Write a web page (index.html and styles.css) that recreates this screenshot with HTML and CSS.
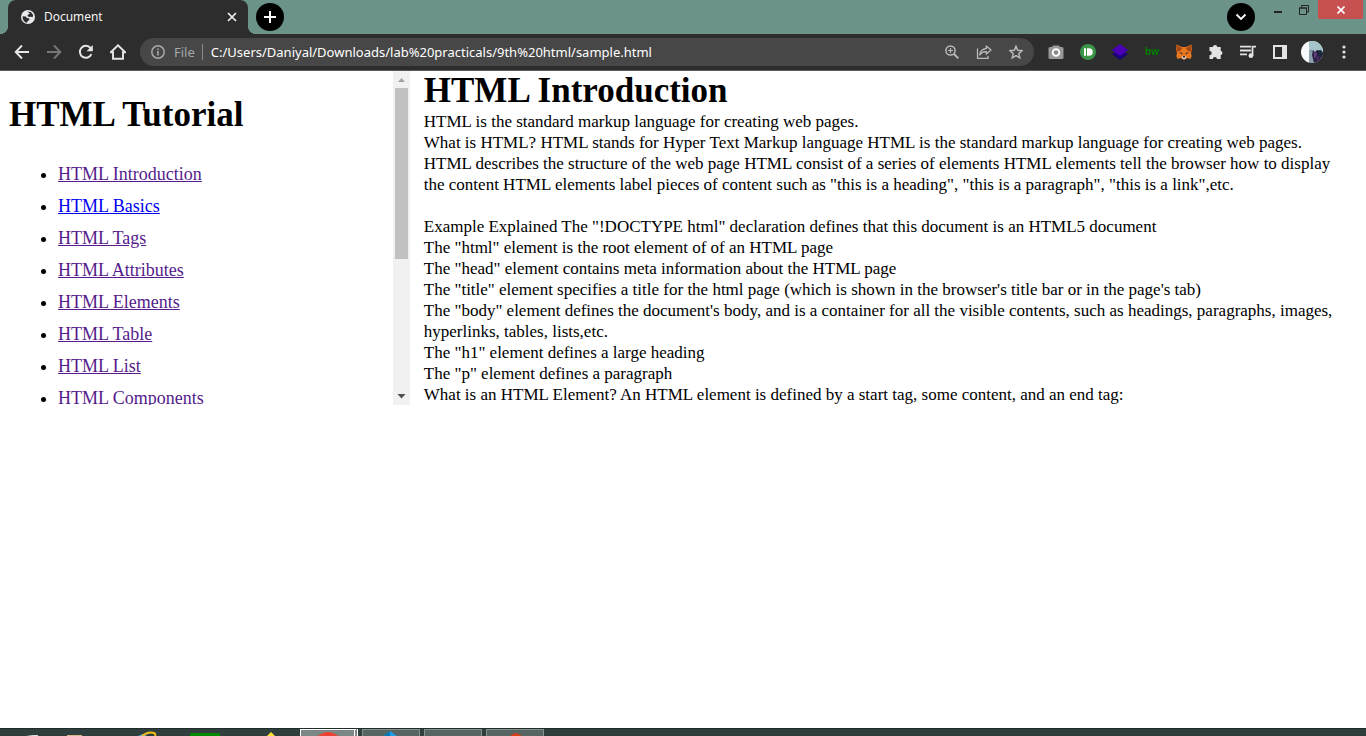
FILE: index.html
```html
<!DOCTYPE html>
<html lang="en">
<head>
<meta charset="utf-8">
<title>Document</title>
<link rel="stylesheet" href="styles.css">
</head>
<body>
<header class="browser">
  <div class="tabstrip">
    <div class="tab">
      <svg class="globe" width="14" height="14" viewBox="0 0 14 14" aria-hidden="true"><circle cx="7" cy="7" r="7" fill="#e8eaed"/><path d="M1.600 6.200 4.800 6.400 6 8l2.200.4.3 1.400-1.900 1.400-.6 1.500C3 12.200 1.500 9.500 1.600 6.200zM6.300 1.600 9.800 2l2.400 2.900-.6 2.300-2-.5-1.400.4L6.400 6l.5-1.300 1.900-.9-.8-1z" fill="#2d2d2d"/></svg>
      <span class="tab-title">Document</span>
      <button class="plain tab-close" aria-label="Close tab"><svg width="10" height="10" viewBox="0 0 10 10"><path d="m1 1 8 8M9 1 1 9" stroke="#f1f1f1" stroke-width="1.700"/></svg></button>
    </div>
    <button class="round" aria-label="New tab"><svg width="12" height="12" viewBox="0 0 12 12"><path d="M6 0v12M0 6h12" stroke="#fff" stroke-width="2"/></svg></button>
    <div class="window-controls">
      <button class="round search-tabs" aria-label="Search tabs"><svg width="12" height="8" viewBox="0 0 12 8"><path d="m1.500 1.500 4.500 4.500 4.500-4.500" fill="none" stroke="#fff" stroke-width="1.800"/></svg></button>
      <button class="plain win" aria-label="Minimize"><svg width="8" height="6" viewBox="0 0 8 6"><path d="M0 4h8v2H0z" fill="#222"/></svg></button>
      <button class="plain win" aria-label="Restore"><svg width="10" height="10" viewBox="0 0 10 10"><path d="M.5 3h7v6.500h-7zM0 3h8M2.500 2V.5h7V7H8" fill="none" stroke="#222"/></svg></button>
      <button class="plain win-close" aria-label="Close"><svg width="8" height="8" viewBox="0 0 8 8"><path d="m.5.5 7 7m0-7-7 7" stroke="#fff" stroke-width="1.700"/></svg></button>
    </div>
  </div>
  <div class="toolbar">
    <div class="cells">
      <button class="plain cell" aria-label="Back"><svg width="16" height="16" viewBox="0 0 16 16"><path d="M15 8H2M8 1.500 1.700 8 8 14.500" fill="none" stroke="#e6e6e6" stroke-width="1.900"/></svg></button>
      <button class="plain cell" aria-label="Forward"><svg width="16" height="16" viewBox="0 0 16 16"><path d="M1 8h13M8 1.500 14.300 8 8 14.500" fill="none" stroke="#777" stroke-width="1.900"/></svg></button>
      <button class="plain cell" aria-label="Reload"><svg width="16" height="16" viewBox="0 0 16 16"><path d="M13.400 10.200A6 6 0 1 1 12.500 4" fill="none" stroke="#e6e6e6" stroke-width="2"/><path d="M14.800 1v6.200H8.600z" fill="#e6e6e6"/></svg></button>
      <button class="plain cell" aria-label="Home"><svg width="16" height="16" viewBox="0 0 16 16"><path d="M.8 8.200 8 1.300l7.200 6.900H13v6.600H3V8.200z" fill="none" stroke="#e6e6e6" stroke-width="1.900"/></svg></button>
    </div>
    <div class="omnibox">
      <svg width="14" height="14" viewBox="0 0 14 14" aria-hidden="true"><circle cx="7" cy="7" r="6.200" fill="none" stroke="#a6a8ab" stroke-width="1.500"/><path d="M6.200 6h1.600v4.500H6.200zM6.200 3.400h1.600V5H6.200z" fill="#a6a8ab"/></svg>
      <label class="scheme" for="url">File</label>
      <input id="url" class="url" type="text" value="C:/Users/Daniyal/Downloads/lab%20practicals/9th%20html/sample.html">
      <div class="cells">
        <button class="plain cell" aria-label="Zoom"><svg width="14" height="14" viewBox="0 0 14 14"><circle cx="5.500" cy="5.500" r="4.600" fill="none" stroke="#bbb" stroke-width="1.500"/><path d="m9 9 4.300 4.300" stroke="#bbb" stroke-width="1.900"/><path d="M5.500 3v5M3 5.500h5" stroke="#bbb" stroke-width="1.200"/></svg></button>
        <button class="plain cell" aria-label="Share"><svg width="16" height="14" viewBox="0 0 16 14"><path d="M1.500 3.500v9.800H12V11" fill="none" stroke="#bbb" stroke-width="1.300"/><path d="M10.300 1 15 5l-4.700 4V6.600C7.500 6.400 5.500 7.400 3.700 10 4.200 6.500 6.300 4 10.300 3.500z" fill="none" stroke="#bbb" stroke-width="1.300" stroke-linejoin="round"/></svg></button>
        <button class="plain cell" aria-label="Bookmark"><svg width="14" height="14" viewBox="0 0 14 14"><path d="m7 1.200 1.700 4.100 4.400.4-3.300 2.900 1 4.300L7 10.600l-3.800 2.300 1-4.300L.9 5.700l4.400-.4z" fill="none" stroke="#bbb" stroke-width="1.400"/></svg></button>
      </div>
    </div>
    <div class="cells">
      <button class="plain cell" aria-label="Screenshot"><svg width="16" height="16" viewBox="0 0 16 16"><path d="M2 3h2l1-1.500h6L12 3h2q1.500 0 1.500 1.500v9Q15.500 15 14 15H2Q.5 15 .5 13.500v-9Q.5 3 2 3" fill="#999"/><circle cx="8" cy="8.500" r="3.300" fill="#888" stroke="#fff" stroke-width="1.900"/></svg></button>
      <button class="plain cell" aria-label="Pushbullet"><svg width="16" height="16" viewBox="0 0 16 16"><circle cx="8" cy="8" r="8" fill="#3a9547"/><path d="M4 4.200h2v7.600H4zM7 4.200h2a3.800 3.800 0 0 1 0 7.600H7z" fill="#fff"/></svg></button>
      <button class="plain cell" aria-label="Layers"><svg width="16" height="16" viewBox="0 0 16 16"><path d="m0 10 8-5 8 5-8 6z" fill="#1c0377"/><path d="m0 6 8-6 8 6-8 6z" fill="#4a00b4"/></svg></button>
      <button class="plain cell bw" aria-label="bw extension">bw</button>
      <button class="plain cell" aria-label="MetaMask"><svg width="16" height="16" viewBox="0 0 16 16"><path d="M.5.500 6 3h4L15.500.500 16 5l-1 4 .7 3-1.200 3-3.500-1-2 1.500H7L5 14l-3.500 1-1.200-3L1 9 0 5z" fill="#e8771f"/><path d="m.5.500 5.700 4L4 7 0 8l.6-3zM15.500.500l-5.700 4L12 7l4 1-.6-3z" fill="#a84a16"/><path d="m3 8 3.500 1L6 10.500zM13 8l-3.500 1 .5 1.500z" fill="#3a2c25"/><path d="m5.200 13 1.800-1h2l1.800 1L9 15.300H7z" fill="#d8c3b5"/><path d="M7 12h2v1.500H7z" fill="#292929"/></svg></button>
      <button class="plain cell" aria-label="Extensions"><svg width="16" height="16" viewBox="0 0 16 16"><path d="M1.500 3H5a2.100 2.100 0 0 1 4.200 0h3.500v3.800a2.200 2.200 0 0 1 0 4.300V15H9a2.100 2.100 0 0 0-4.200 0H1.500v-3.700a2.200 2.200 0 0 0 0-4.400z" fill="#e3e3e3"/></svg></button>
      <button class="plain cell" aria-label="Media control"><svg width="16" height="14" viewBox="0 0 16 14"><path d="M0 1.700h11M0 5.500h11M0 9.300h7M12.500 11V1.700H16" fill="none" stroke="#e3e3e3" stroke-width="1.800"/><circle cx="10.900" cy="10.700" r="2.400" fill="#e3e3e3"/></svg></button>
      <button class="plain cell" aria-label="Side panel"><svg width="14" height="14" viewBox="0 0 14 14"><path d="M0 0h14v14H0zM2 2v10h7V2z" fill="#e3e3e3" fill-rule="evenodd"/></svg></button>
      <button class="plain cell" aria-label="Profile"><svg width="22" height="22" viewBox="0 0 22 22"><defs><clipPath id="avatar"><circle cx="11" cy="11" r="11"/></clipPath></defs><g clip-path="url(#avatar)"><path d="M0 0h22v22H0z" fill="#f6f8f9"/><path d="M8 0h14v12H8z" fill="#a5c5ca"/><path d="m8 10 4-1 2 2 2-2 4 1 2 2v10H8z" fill="#292044"/><path d="m8 10 4-1-1 5 2 8H8z" fill="#8ca0ad"/><path d="m13 11 3 1-1 4-2 1z" fill="#65407b"/><path d="m16 10 4-1 2 3v3l-4-1z" fill="#172b39"/><path d="m15 17 3-2-1 5z" fill="#59336d"/></g></svg></button>
      <button class="plain cell" aria-label="Menu"><svg width="4" height="14" viewBox="0 0 4 14" fill="#e3e3e3"><circle cx="2" cy="2" r="1.600"/><circle cx="2" cy="7" r="1.600"/><circle cx="2" cy="12" r="1.600"/></svg></button>
    </div>
  </div>
</header>
<main class="page">
  <div class="frames">
    <nav class="sidebar">
      <div class="sidebar-view">
        <h1>HTML Tutorial</h1>
        <ul>
          <li><a href="#intro">HTML Introduction</a></li>
          <li><a class="fresh" href="#basics">HTML Basics</a></li>
          <li><a href="#tags">HTML Tags</a></li>
          <li><a href="#attributes">HTML Attributes</a></li>
          <li><a href="#elements">HTML Elements</a></li>
          <li><a href="#table">HTML Table</a></li>
          <li><a href="#list">HTML List</a></li>
          <li><a href="#components">HTML Components</a></li>
        </ul>
      </div>
      <div class="scrollbar" aria-hidden="true">
        <svg width="17" height="17" viewBox="0 0 17 17"><path d="m5 11 3.500-4 3.500 4z" fill="#a3a3a3"/></svg>
        <div class="track"><div class="thumb"></div></div>
        <svg width="17" height="17" viewBox="0 0 17 17"><path d="m4.500 6 4 4.500 4-4.500z" fill="#505050"/></svg>
      </div>
    </nav>
    <article class="content" id="intro">
      <h1>HTML Introduction</h1>
      <p>HTML is the standard markup language for creating web pages.</p>
      <p>What is HTML? HTML stands for Hyper Text Markup language HTML is the standard markup language for creating web pages.<br>
      HTML describes the structure of the web page HTML consist of a series of elements HTML elements tell the browser how to display<br>
      the content HTML elements label pieces of content such as "this is a heading", "this is a paragraph", "this is a link",etc.</p>
      <br>
      <p>Example Explained The "!DOCTYPE html" declaration defines that this document is an HTML5 document</p>
      <p>The "html" element is the root element of of an HTML page</p>
      <p>The "head" element contains meta information about the HTML page</p>
      <p>The "title" element specifies a title for the html page (which is shown in the browser's title bar or in the page's tab)</p>
      <p>The "body" element defines the document's body, and is a container for all the visible contents, such as headings, paragraphs, images,<br>
      hyperlinks, tables, lists,etc.</p>
      <p>The "h1" element defines a large heading</p>
      <p>The "p" element defines a paragraph</p>
      <p>What is an HTML Element? An HTML element is defined by a start tag, some content, and an end tag:</p>
    </article>
  </div>
</main>
<footer class="taskbar">
  <svg width="300" height="8" viewBox="0 0 300 8" aria-hidden="true"><path d="m26 8 7-1h5v1z" fill="#ddd"/><path d="M67 7h15v1H67z" fill="#d6b98a"/><path d="m138 8 5-2 4 2z" fill="#54b4e8"/><path d="M142 8q6-5 12-3 2 1 1 3" fill="none" stroke="#f0bd18" stroke-width="2"/><path d="M190 5h30v3h-30z" fill="#008a00"/><path d="m267 8 4-4 4 4z" fill="#ffe135"/></svg>
  <div class="tasks">
    <button class="task active" aria-label="Chrome"><svg width="22" height="8" viewBox="0 0 22 8"><path d="M1 6q10-8 20 0v2H1z" fill="#ea4335"/></svg></button>
    <button class="task" aria-label="Visual Studio Code"><svg width="22" height="8" viewBox="0 0 22 8"><path d="m2 7 8-6 10 7z" fill="#1e9fe8"/><path d="m2 7 8-6v7z" fill="#0877b8"/></svg></button>
    <button class="task" aria-label="Application"></button>
    <button class="task" aria-label="Office"><svg width="22" height="8" viewBox="0 0 22 8"><path d="m6 6 5-3 6 2v3H6z" fill="#dc3e15"/></svg></button>
  </div>
</footer>
</body>
</html>
```
FILE: styles.css
```css
* { box-sizing: border-box; }
body {
  margin: 0;
  min-height: 100vh;
  display: flex;
  flex-direction: column;
  background: #fff;
  color: #000;
  font: 17px/21px "Liberation Serif", "Times New Roman", serif;
}
svg { display: block; flex: none; }
button { font: inherit; padding: 0; border: 0; }
.plain { background: none; display: flex; align-items: center; justify-content: center; }
.browser { font: 12px/16px "Open Sans", "Noto Sans", sans-serif; color: #fff; background: #2d2d2d; }
.tabstrip {
  display: flex;
  align-items: center;
  gap: 8px;
  height: 34px;
  padding: 0 3px 0 8px;
  background: #6b9389;
}
.tab {
  position: relative;
  width: 240px;
  height: 34px;
  padding: 0 10px 0 13px;
  display: flex;
  align-items: center;
  gap: 9px;
  background: #2d2d2d;
  border-radius: 8px 8px 0 0;
}
.tab::before, .tab::after {
  content: "";
  position: absolute;
  bottom: 0;
  width: 8px;
  height: 8px;
}
.tab::before { right: 100%; background: radial-gradient(circle at 0 0, #6b9389 8px, #2d2d2d 8px); }
.tab::after { left: 100%; background: radial-gradient(circle at 100% 0, #6b9389 8px, #2d2d2d 8px); }
.tab-title { flex: 1; }
.tab-close { width: 12px; height: 16px; }
.round {
  width: 28px;
  height: 28px;
  border-radius: 50%;
  background: #000;
  display: flex;
  align-items: center;
  justify-content: center;
}
.window-controls { margin-left: auto; align-self: stretch; display: flex; align-items: flex-start; }
.search-tabs { margin: 3px 10px 0 0; }
.win { width: 26px; height: 19px; }
.win-close { width: 45px; height: 19px; margin-left: 1px; background: #c75050; }
.toolbar {
  display: flex;
  align-items: center;
  gap: 6px;
  height: 37px;
  padding: 0 6px;
  border-bottom: 1px solid #5c5c5c;
}
.cells { display: flex; }
.cell { width: 32px; height: 28px; }
.bw { color: #008000; font: bold 10px/16px "Liberation Sans", sans-serif; }
.omnibox {
  flex: 1;
  min-width: 0;
  height: 28px;
  padding: 0 2px 0 11px;
  display: flex;
  align-items: center;
  border-radius: 14px;
  background: #474747;
  font: 13px/16px "Noto Sans", "Open Sans", sans-serif;
}
.scheme { margin-left: 9px; padding-right: 7px; border-right: 1px solid #8a8a8a; color: #a6a8ab; }
.url {
  flex: 1;
  min-width: 0;
  padding: 0 0 0 8px;
  border: 0;
  outline: 0;
  background: none;
  color: #fff;
  font: inherit;
}
.page { flex: 1; }
.frames { display: flex; }
.sidebar { width: 30%; display: flex; font-size: 18px; }
.sidebar-view { flex: 1; contain: size; overflow: hidden; padding: 0 9px; }
h1 { margin: 0; font-size: 35px; line-height: 40px; }
.sidebar-view h1 { margin: 24px 0 23px; }
ul { margin: 0; padding: 0 0 0 49px; }
li { line-height: 32px; }
a { color: #551a8b; }
a.fresh { color: #0000ee; }
.scrollbar { width: 17px; display: flex; flex-direction: column; background: #f1f1f1; }
.track { flex: 1; padding: 0 2px; }
.thumb { height: 57%; background: #c1c1c1; }
.content { flex: 1; min-width: 0; padding-left: 14px; }
.content p { margin: 0; }
.taskbar {
  height: 8px;
  overflow: hidden;
  display: flex;
  background: #2f3f3d;
  box-shadow: inset 0 1px #202b2a;
}
.tasks { display: flex; gap: 4px; padding-top: 1px; }
.task {
  width: 58px;
  height: 40px;
  display: flex;
  justify-content: center;
  background: #566562;
  border: 1px solid #84918e;
}
.task.active { background: #7b8885; border-color: #fff; border-right: 4px double #fff; }
```
